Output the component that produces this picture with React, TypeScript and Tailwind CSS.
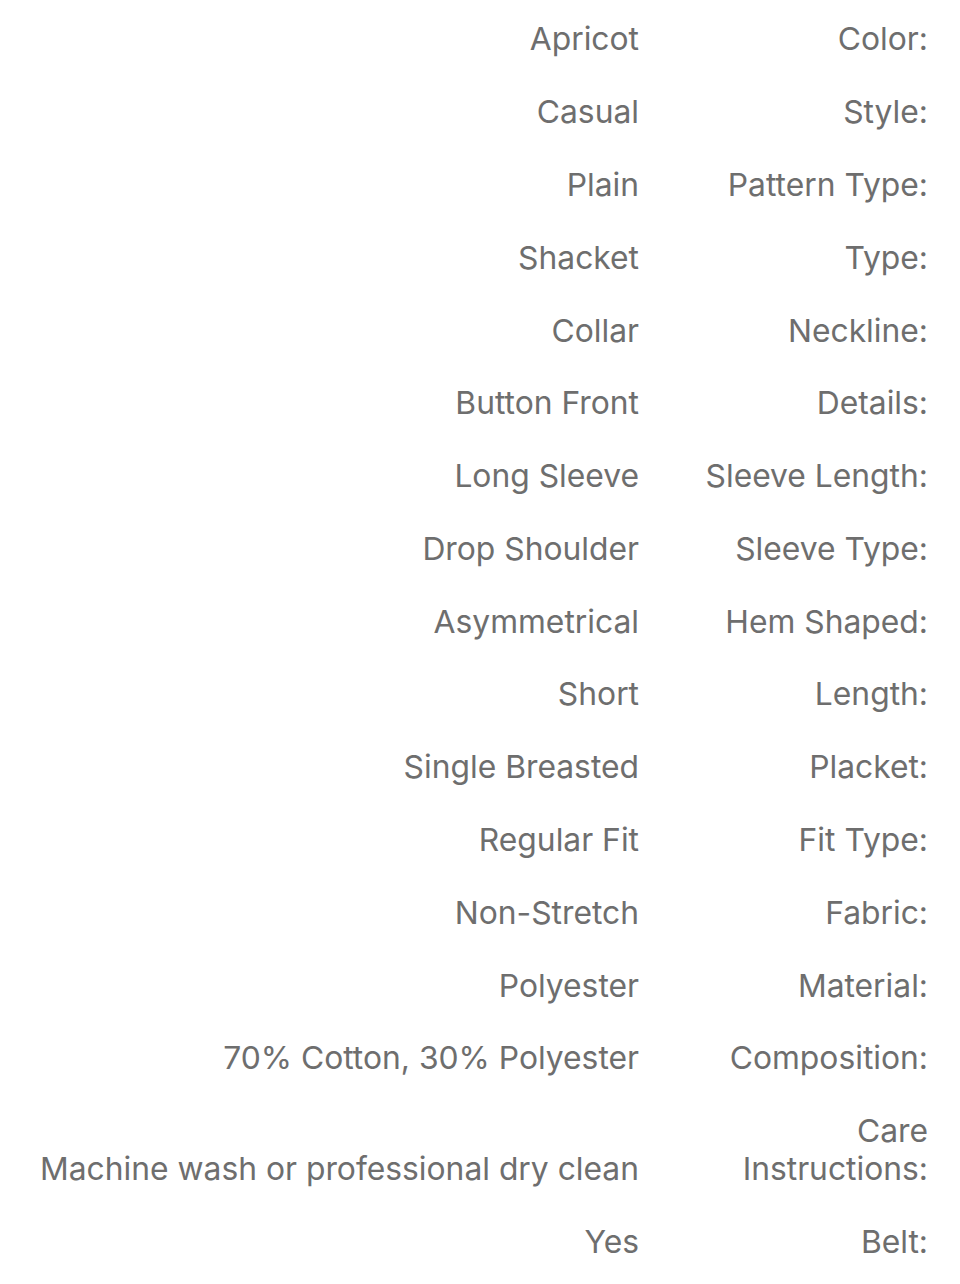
import React from 'react';

const rows: [string, string][] = [
  ['Apricot', 'Color:'],
  ['Casual', 'Style:'],
  ['Plain', 'Pattern Type:'],
  ['Shacket', 'Type:'],
  ['Collar', 'Neckline:'],
  ['Button Front', 'Details:'],
  ['Long Sleeve', 'Sleeve Length:'],
  ['Drop Shoulder', 'Sleeve Type:'],
  ['Asymmetrical', 'Hem Shaped:'],
  ['Short', 'Length:'],
  ['Single Breasted', 'Placket:'],
  ['Regular Fit', 'Fit Type:'],
  ['Non-Stretch', 'Fabric:'],
  ['Polyester', 'Material:'],
  ['70% Cotton, 30% Polyester', 'Composition:'],
  ['Machine wash or professional dry clean', 'Care Instructions:'],
  ['Yes', 'Belt:'],
];

export default function App() {
  return (
    <div className="min-h-[1284px] bg-white pt-[3px] pr-[32px] font-['Inter',sans-serif] text-[31.8px] leading-[38px] text-[#6e6e6e]">
      {rows.map(([value, label]) => (
        <div key={label} className="grid grid-cols-[1fr_240px] items-end gap-x-[49px] py-[17.4px] text-right">
          <div>{value}</div>
          <div>{label}</div>
        </div>
      ))}
    </div>
  );
}
